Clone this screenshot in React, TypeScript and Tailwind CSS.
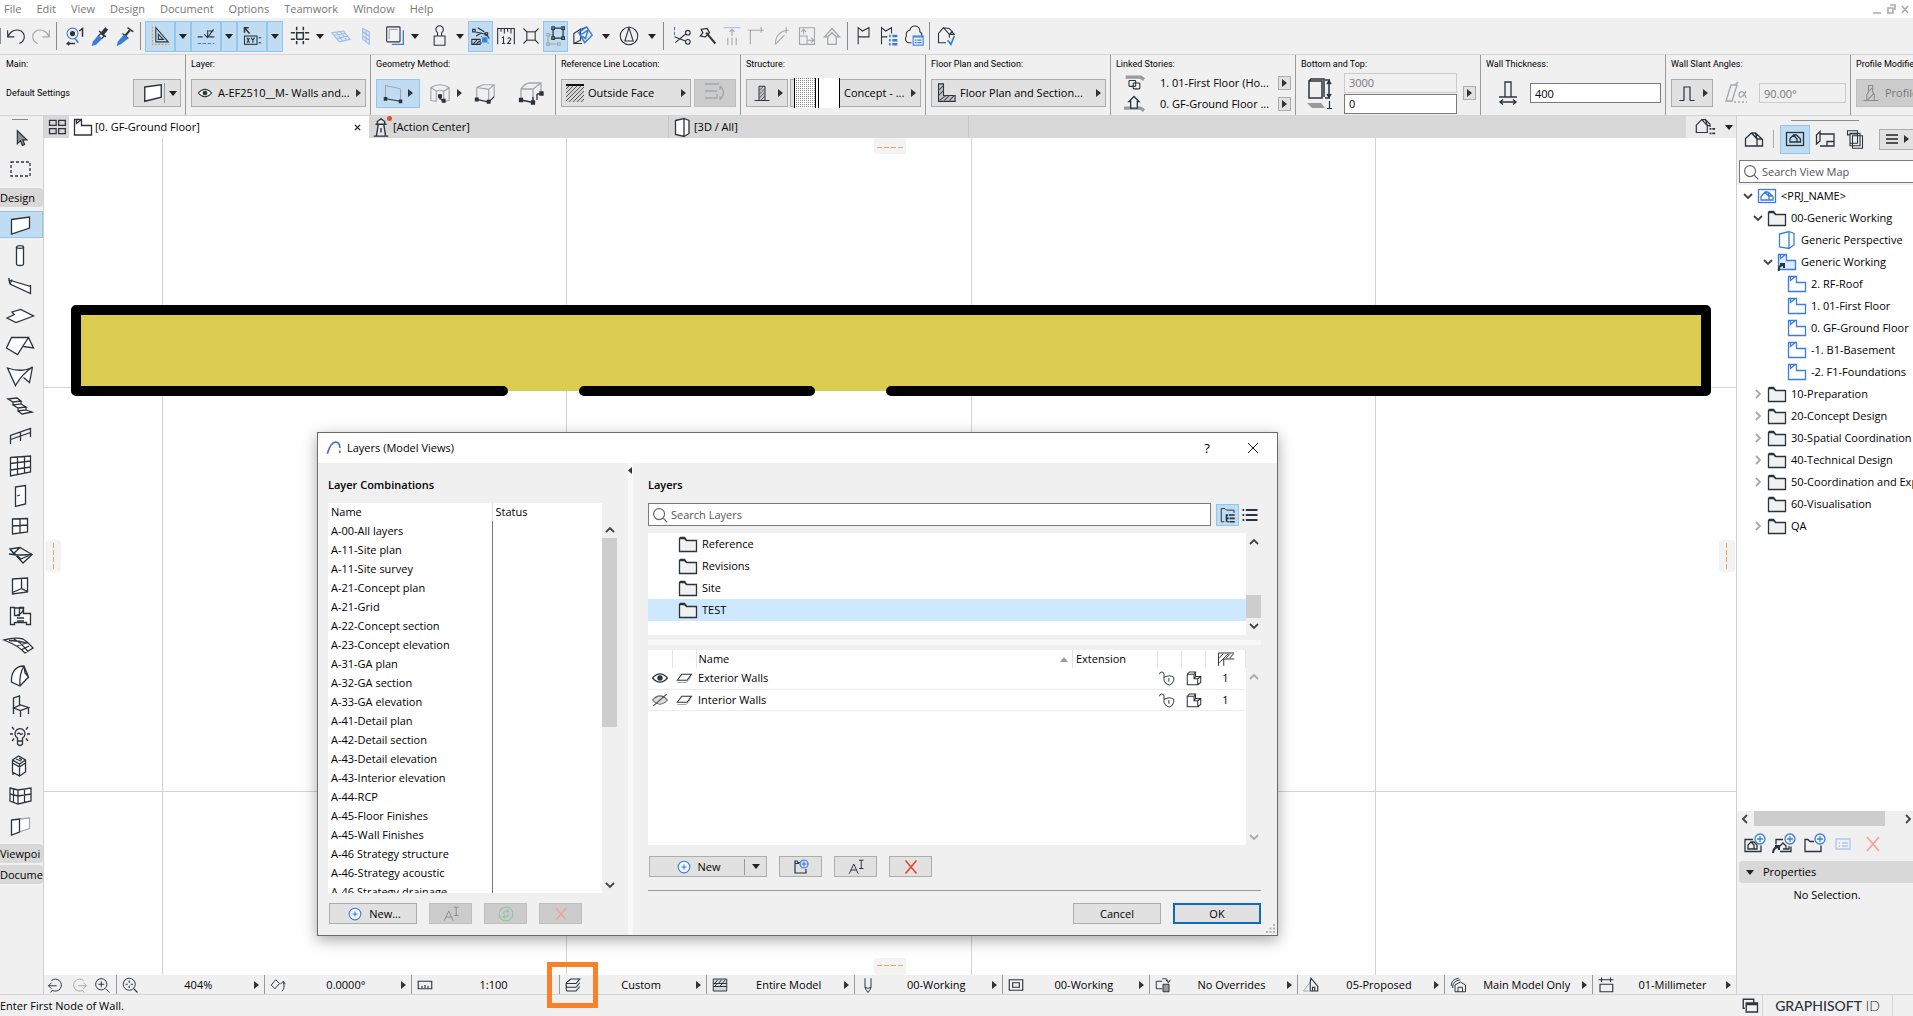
import type { ReactNode } from "react";

const INK = "#2b333b";
const BLUE = "#3b7ddd";
const GREY = "#a3a7aa";

// All icons are drawn on a 24 x 24 grid
const icons: Record<string, ReactNode> = {
    undo: <path d="M2 5v8h8M2 13C5 6 12 3 18 6c6 4 5 12-2 15" />,
    redo: <path stroke={GREY} d="M22 5v8h-8M22 13C19 6 12 3 6 6c-6 4-5 12 2 15" />,
    find: <><circle cx="9" cy="9" r="6.5" stroke={BLUE} /><circle cx="9" cy="9" r="2.5" fill={INK} /><path stroke={BLUE} strokeWidth="2" d="M12 15l4 5" /><path strokeWidth="1.8" d="M17 6l4-3v10M9 21H3l2-2M3 21l2 2M8 21h4" /></>,
    dropper: <><path strokeWidth="4.5" d="M15 9l5-6" /><path strokeWidth="1.8" d="M11 6l8 7" /><path fill={BLUE} stroke={BLUE} d="M10 12l4 3-7 7-4 1 1-4z" /><path d="M10 12l3-3 4 3-3 3" /></>,
    inject: <><path strokeWidth="2.4" d="M12 12l6-7" /><path strokeWidth="1.6" d="M9 9l7 6M15 2l7 5" /><path fill={BLUE} stroke={BLUE} d="M11 11l4 4-8 6-4 2 1-4z" /></>,
    guide: <><path d="M7 2v17h15zM10 10v6h6z" /><path stroke="#f08a3c" strokeDasharray="2 2" d="M3 1v21h20" /></>,
    snap: <><path d="M2 13h6M16 13h6M10 10l4 4 7-10M14 13V5M15 6h6" /><path stroke={BLUE} strokeDasharray="4 2" d="M2 21h20" /></>,
    xy: <><path strokeWidth="1.8" d="M3 8V2h5M3 2l6 7" /><rect x="3" y="12" width="15" height="10" /><path d="M6 14l3 6M9 14l-3 6M11 14l2 3 2-3M13 17v3M20 14h3M20 20h3" /></>,
    grid: <path strokeWidth="1.8" d="M8 1v4M8 7v9M8 18v4M16 1v4M16 7v9M16 18v4M1 8h5M8 8h8M18 8h5M1 16h5M8 16h8M18 16h5" />,
    planeH: <path stroke="#9dbbe6" fill="#dfe9f7" d="M1 8l14-2 8 10-13 3zM6 7l8 11M11 6.5l8 10.5M4 11l13-2M7 15l14-3" />,
    planeV: <path stroke="#9dbbe6" fill="#dfe9f7" d="M8 3l8 4v15l-8-6zM8 7l8 5M8 12l8 5M12 5v14" />,
    trace: <><path stroke={BLUE} strokeWidth="1.6" d="M8 22h14V5" /><rect x="2" y="1" width="16" height="18" rx="1" fill="#f4f4f4" /><path stroke={GREY} d="M5 4v12M5 4h10" /></>,
    weight: <path d="M5 12h13v11H5zM9 12V8a4.500 4.500 0 1 1 5 0v4" />,
    nodes: <><path d="M4 7l14 3 4 5M2 4h3v3H2zM17 8h3v3h-3zM6 12l7-4M8 2l8 5" /><path fill={BLUE} stroke={BLUE} d="M14 14h5v5h-5zM12 12l1 1M21 21l-1-1M21 12l-1 1M12 21l1-1" /><path d="M1 16h10v6H1zM2 22l5-5M6 22l4-4" /></>,
    ruler: <><path d="M2 2v10M2 3h20v9M6 3v4M10 3v6M14 3v4M18 3v6M7 14l2-1v8M7 21h4M2 12v10M22 12v10" /><path d="M14 15c2-2 5 0 3 2l-3 4h4" /></>,
    cross: <><rect x="7" y="7" width="10" height="10" /><path d="M3 3l4 4M21 3l-4 4M3 21l4-4M21 21l-4-4" /></>,
    group: <><path stroke={GREY} d="M1 9h3v3H1zM1 20h3v3H1zM14 20h3v3h-3zM2.500 12v8M4 21.500h10M4 10.500h4" /><path strokeWidth="1.500" d="M7 1h3v3H7zM19 1h3v3h-3zM7 13h3v3H7zM19 13h3v3h-3zM8.500 4v9M20.500 4v9M10 2.500h9M10 14.500h9" /></>,
    cube: <><path d="M1 9l8-5v13l-8 4zM9 4l6-2M1 21h10" /><path stroke={BLUE} strokeWidth="1.800" d="M7 8l9-7 7 10-9 9zM10 10l8-5-3 10-5-3" /></>,
    compass: <><circle cx="12" cy="12" r="10.500" /><path d="M12 2l5 16H7z" /></>,
    scissors: <><path stroke={BLUE} d="M3 1v4M3 7v4" /><path d="M3 13l13 5M4 20l13-11" /><circle cx="19" cy="8" r="2.800" /><circle cx="19" cy="19" r="2.800" /></>,
    axe: <><path strokeWidth="2.400" d="M11 8l11 13" /><path strokeWidth="1.500" d="M5 4l7-1 3 5-5 5-6-1 3-4z" /></>,
    adjust: <><path stroke="#9fc1ee" d="M2 2h20" /><path stroke={GREY} d="M12 12V4M9 7l3-3 3 3M7 14v9M12 14v9M17 14v9" /></>,
    fillet: <path stroke={GREY} d="M4 22V5h16M17 1v7M1 5h3" />,
    arc: <path stroke={GREY} d="M4 22C4 12 10 5 20 5M17 1v8M4 22L15 11" />,
    resize: <path stroke={GREY} d="M3 2h18v20H3zM3 12h9v10M12 17h7M17 14l3 3-3 3M8 10V4M5 7l3-3 3 3" />,
    roofup: <path stroke={GREY} strokeWidth="1.600" d="M3 13l9-10 9 10h-4v9H7v-9zM7 13l5-5 5 5" />,
    flag: <path d="M5 22V2l5 4 8-4v11H5" />,
    flaglist: <><path d="M3 22V2l5 4 7-4v7M3 13h7" /><path stroke={BLUE} strokeWidth="3" d="M12 12h2M16 12h6M12 17h2M16 17h6M12 22h2M16 22h6" /></>,
    cloud: <><path d="M9 20H5a5 5 0 0 1-2-8 5 5 0 0 1 4-7 6 6 0 0 1 12 2 4 4 0 0 1 2 5" /><rect x="11" y="12" width="12" height="11" stroke={BLUE} fill="#f0f0f0" /><path stroke={BLUE} strokeWidth="1.600" d="M11 13h12M13 17h2M16 17h5M13 20h2M16 20h5" /></>,
    housecheck: <><path d="M12 20H3V9l6-7 7 8v4M9 2l7 1 6 7h-6M16 10l4-4" /><path stroke={BLUE} strokeWidth="2" d="M14 17l4 5 4-10" /></>,

    cursor: <path fill="#8c8f92" d="M8 3v14l3.500-3 2 5 2.500-1-2-5h4.500z" />,
    marquee: <rect x="3" y="5" width="19" height="14" strokeDasharray="3 2" />,
    wall: <path fill="#fff" d="M3.500 6.500l18-2.500v11l-18 6z" />,
    column: <><path fill="#fff" d="M8.500 3v17c0 2 7 2 7 0V3" /><ellipse cx="12" cy="3" rx="3.500" ry="1.300" fill="#fff" /></>,
    beam: <path fill="#fff" d="M1 6l21.500 6.500v7L2 10zM1 4v3M4 5.500l-2 4.500M22.500 11v9" />,
    slab: <path fill="#fff" d="M-1 14l7.300-3.500L4 8l8.700-2.500L25.500 12 8 18.500z" />,
    roof: <path fill="#fff" d="M3.500 3.500h17l-11 17-11-6.500zM20.500 3.500L25.500 14l-10-1.500" />,
    shell: <path fill="#fff" d="M-.5 4Q14 9 24.500 3 14 10 7.500 21.500zM24.500 3l-3 15.500-6-5" />,
    stair: <path fill="#fff" d="M0 5l9-1 4 3-8 1zM5 8v3l8-1V7M5 11l5 3 8-1-5-3M10 14v3l8-1v-3M10 17l4 3 10-2-6-2" />,
    railing: <path d="M2.500 20v-8.500L22.500 4.500V13M12.500 17V8M2.500 15.500l20-7" />,
    curtain: <path fill="#fff" d="M2.500 3.500l20-1.500v16l-20 4zM2.500 9.500l20-2.500M2.500 16l20-3M9.500 3v17.500M16.500 2.500v16.500" />,
    door: <path fill="#fff" d="M7.500 3L17.500 1.500v18.500l-10 2.500zM9 12l3-1" />,
    window: <path fill="#fff" d="M4.500 5l15-.5v13.500l-15 2zM12 5v14M4.500 12l15-1" />,
    skylight: <path fill="#fff" d="M2 5l10-1.500 12 7-9 8.500zM1 10q12 2 23 0M2 5l5 6M12 3.500L6 9l7 6 9-4" />,
    opening: <path fill="#fff" d="M4.500 5l15-1v14l-15 2zM13.500 4.500v10l6 3M13.500 14.500l-9 4" />,
    zone: <><path fill="#fff" d="M2.500 3.500h4v8h5v-8h4v6h7v11h-4v-2h-12v2h-4z" /><path d="M6.500 4h9c0 4-3 6-6 7M9 14h7M9 17h7" /></>,
    mesh: <path fill="#fff" d="M-4 6Q7 3 15 5q5 3 10 9l-8 5Q11 12-4 6zM5 4.500q7 3 15 13M1 6.500q10 0 20 3M9 12l9-3M13 16l8-4" />,
    morph: <path fill="#fff" d="M16 2C7 2 3 9 3.500 18l8.500 4 8.500-9zM16 2q-5 8-4 20M16 2l1 7 3.500 4" />,
    chair: <path d="M5.500 20V4l6-2v9M5.500 14l7-3 8 2.500-8 3zM12.500 16.500V23M20.500 13.500V20" />,
    lamp: <><path d="M9.500 17v-3a5 5 0 1 1 5 0v3zM9.500 17v3q2.500 3 5 0v-3M9 10l2-1 2 1.500 2-1M2 10h3M19 10h3M4 3l2 2.500M20 3l-2 2.500M4 17l2-2.500M20 17l-2-2.500" /></>,
    equip: <path fill="#fff" d="M4.500 6l6-4 7 4v12l-6 4-7-4zM4.500 6l7 4 6-4M11.500 10v12M4.500 9l7 4 6-4M8 5l5 2M11 4l3 2M5 18v3" />,
    cwall: <path fill="#fff" d="M2 4l8 2 13-2v13l-13 3-8-3zM2 10l8 2 13-2M10 6v14M5.500 5v13M16.500 5v14" />,
    panels: <><path fill="#fff" stroke={GREY} d="M11 5l10.500-1v10.500L11 18" /><path fill="#fff" d="M3.500 6l8-1v13l-8 3z" /></>,

    wallThin: <path fill="#fff" strokeWidth="1.500" d="M3 5.500L21 3v13.500L3 21z" />,
    geoWall: <><path stroke={GREY} d="M3 19V3l18 4v15" /><path d="M3 19l18 3" /><path fill={INK} d="M1.500 17.500h3v3h-3zM19.500 20.500h3v3h-3z" /></>,
    geoCurve: <><path stroke={GREY} d="M2 6q10-6 20 0v14q-2 1-6 1V10q-4-2-8 0v11q-4 0-6-1zM2 6q3 2 6 4M22 6q-2 2-6 4" /><path d="M12 15v4M12 18l4 3" /><path fill={INK} d="M10.500 14h3v3h-3zM14.500 19h3v3h-3z" /></>,
    geoTrap: <><path stroke={GREY} d="M3 19V6l7-3h12v13M3 6l13 2v13M16 8l6-5" /><path d="M3 19l13 3 6-6" /><path fill={INK} d="M1.500 17.500h3v3h-3zM14.500 20h3v3h-3z" /></>,
    geoPoly: <><path stroke={GREY} d="M2 18V8q4-6 9-6h11v9M2 8h12l8-6M14 8v13" /><path d="M2 19l12 2.500M14 21v-5M18 13h5M18 13v6" /><path fill={INK} d="M.5 17.500h3v3h-3zM12.500 20h3v3h-3zM21 11h3v3h-3z" /></>,
    flip: <path stroke={GREY} d="M2 3h14M2 10h12M2 17h12v-4M17 5q7 6 0 14M17 5v4M17 19v-4" />,
    hatchCol: <><path d="M2 22h6M16 22h6M8 22V3h8v19z" fill="#c4c6c8" /><path stroke="#555" d="M8 9l6-6M8 14l8-8M8 19l8-8M11 21l5-5" /></>,
    lwall: <><path d="M3 1h6v14h14v7H3z" fill="#c4c6c8" /><path d="M3 9l6-6M3 15l6-6M4 21l8-6M10 21l6-6M16 21l6-6" stroke="#555" /></>,
    storyUp: <><path stroke="#999" strokeWidth="4" d="M2 5h18l4 3" /><rect x="6" y="9" width="8" height="7" rx="1" /><rect x="11" y="12" width="8" height="7" rx="1" /></>,
    storyDn: <><path stroke="#999" strokeWidth="4" d="M0 17h20l4 3" /><path fill="#f0f0f0" strokeWidth="1.600" d="M8 17v-8H6l6-6 6 6h-2v8z" /></>,
    thick: <path fill="none" d="M3 16h6M15 16h6M9 16V1h6v15M9 16h6M4 21h16M7 18.500L4 21l3 2.500M17 18.500l3 2.500-3 2.500" />,
    slant: <path strokeWidth="1.600" d="M2 22h6M16 22h6M8 22V4h8v18" />,
    slantA: <><path stroke={GREY} d="M2 20L7 4h6L8 20zM11 4l3-3" /><path stroke={GREY} strokeDasharray="2 2" d="M10 21h13" /><path stroke={GREY} d="M22 10c-2 6-7 8-7 4s5-6 7 3" /></>,
    heights: <path strokeWidth="1.500" d="M2 4h13v17H2zM2 4l2-2h13v18M18 3h5M18 21h5M22 5v14M20 7l2-3 2 3M20 17l2 3 2-3" />,
    prof: <path stroke="#8b8e90" d="M3 21h18M7 21V14l2-3V3h5v8l2 3v7M8 12l5-6M8 20l7-7" />,

    four: <path strokeWidth="1.500" d="M3 4h8v6H3zM14 4h8v6h-8zM3 14h8v6H3zM14 14h8v6h-8z" />,
    plan: <path fill="#fff" d="M3.500 4.500h7v6h10v9.500h-17zM5.500 4.500v4l5-4" />,
    planBlue: <path stroke={BLUE} fill="#fff" d="M3.500 4.500h8v6h9v9h-17zM5.500 4.500v4l5-4" />,
    planLink: <><path stroke={BLUE} fill="#dceafa" d="M3.500 4.500h8v6h9v9h-17zM5.500 4.500v4l5-4" /><path strokeWidth="2" d="M4 21q-1-5 4-6M5 14h4v4" /></>,
    tower: <path fill="#e7e7e7" strokeWidth="1.500" d="M7 22l2-13h6l2 13zM8 9V6l4-3 4 3v3M6 9h12M4 22h16M12 13v5" />,
    box3d: <path fill="#fff" d="M5.500 5.500L14 3.500v18l-8.500-2zM14 3.500l5 2v13l-5 3" />,
    box3dBlue: <path stroke={BLUE} fill="#fff" d="M4.500 6L14 3.500v17l-9.500-1.500zM14 3.500l5 2V17l-5 3.500" />,
    house: <path d="M3.500 19v-7.500L9.500 6l5.500 6v7zM9.500 6h4l7 6.500V19H15M13.500 6l1.500 6h5.500" />,
    houseSm: <><path d="M2.500 18v-8l6-6 6 6.500V18zM8.500 4h4l5 5v3M12.500 4l2 6.500H17" /><path strokeWidth="2" d="M18 13v2M18 18v2M20 14h3M20 19h3" /></>,
    houseBox: <><rect x="3.500" y="5.500" width="17" height="13" /><path d="M7 15v-3.500L10.500 8l3.500 4v3zM10.500 8h3l4 4v3H14" /></>,
    prj: <><rect x="3.500" y="5.500" width="17" height="13" stroke={BLUE} fill="#fff" /><path stroke={BLUE} d="M6 16v-3.500L10 8l4 4.500V16zM10 8h3l5 4.500V16h-4M13 8l1 4h4" /></>,
    layout: <path d="M3.500 17V8L7 4.500V14zM7 7h14v12H7M7 14l-3.500 3M14 19v-4.500h7" />,
    books: <path fill="#f0f0f0" d="M9 8h12v15H9zM6 5h12v15H6zM3 2h12v15H6V7H3zM6 6h9" />,
    folder: <path fill="#f1f1f1" d="M3.500 19.500v-13h5l2 2h10v11zM3.500 6.500l1-1h4l2 2.500" />,
    addHouse: <><path d="M12 7.500H4v12h16v-6M7 17v-4l3-3 3 3v4zM10 10h3l3 3v4h-3" /><Plus cx={19} cy={7} /></>,
    addLink: <><path d="M12 7.500H5v5M9 19.500h11v-5M9 14l3-3 3 3v3h-3M15 17h3v-3" /><path strokeWidth="2" d="M2 21q0-5 5-6M4 14h4v4" /><Plus cx={19} cy={7} /></>,
    addFolder: <><path d="M13 9.500H9l-2-2H4v12h16v-6" /><Plus cx={19} cy={7} /></>,
    listBlue: <path stroke="#a9c7f0" d="M5 7h14v10H5zM8 11h1M11 11h6M8 14h1M11 14h6" />,
    delPale: <path stroke="#f2a594" strokeWidth="1.800" d="M6 5l12 14M18 5L6 19" />,
    del: <path stroke="#e8492a" strokeWidth="1.800" d="M6 5l12 14M18 5L6 19" />,
    rename: <path d="M3 21l6-13 6 13M5 16h8M16 3h6M19 3v11M16 14h6" />,
    cycle: <><circle cx="12" cy="12" r="7.500" stroke="#8fc9a3" /><path stroke="#8fc9a3" d="M9 12q1-4 5-3M15 12q-1 4-5 3M13 7l2 2-2 2M11 17l-2-2 2-2" /></>,
    plus: <Plus cx={12} cy={12} r={7} />,
    treeView: <><path d="M7 21H3V3.500h5l2 2h10V9" /><path strokeWidth="2.200" d="M9 12h3M13 12h8M11 16.500h2M14 16.500h7M11 21h2M14 21h7M10 12v9" /></>,
    listView: <path strokeWidth="2.200" d="M3 6h2M7 6h14M3 12h2M7 12h14M3 18h2M7 18h14" />,
    eye: <><path strokeWidth="1.400" d="M3 12q9-10 18 0-9 10-18 0z" fill="#fff" /><circle cx="12" cy="12" r="2.600" fill={INK} /></>,
    eyeOff: <><path d="M3 12q9-10 18 0-9 10-18 0z" fill="#ddd" stroke="#666" /><path stroke="#444" d="M4 19L20 5" /></>,
    layer: <><path stroke={GREY} d="M3 18h12l6-7" /><path fill="#fff" strokeWidth="1.400" d="M3 15l6-8h13l-6 8z" /></>,
    lock: <path d="M8 11q4-1.500 7-2 3 .5 6 2v4q-1 5-6 6.500-6-1.500-7-6.500zM8 11V7q0-3-3-3T2 7M14.500 12v5" />,
    solid: <path fill="#fff" strokeWidth="1.400" d="M3 7l3-3h8l-2 3M3 7h9v6h5v8H3zM14 4v6h7v8l-4 3M12 13l2-3M17 13l4-3" />,
    hatchHead: <path d="M2 4h21M2 4V21M9 21v-9h14M3 11l5-6M3 17l12-12M12 11l5-6M17 11l5-6" />,
    search: <><circle cx="11" cy="11" r="6" stroke="#666" /><path stroke="#666" d="M15.500 15.500l4.500 4.500" /></>,
    logo: <path stroke="#4f6fc9" strokeWidth="2" d="M4 19Q8 5 14 5q5 0 5 7M19 15v3" />,

    prev: <path d="M2 13h11M6 9l-4 4 4 4M6 6a8 8 0 1 1 1 13l-2 3" />,
    next: <path stroke={GREY} d="M22 13H11M18 9l4 4-4 4M18 6a8 8 0 1 0-1 13l2 3" />,
    zoomin: <><circle cx="11" cy="11" r="7.500" /><path d="M7 11h8M11 7v8M17 17l5 5" /></>,
    fit: <><circle cx="11" cy="11" r="8" /><path strokeWidth="1.500" d="M17 17l5 5M6 11h3M13 11h3M11 6v3M11 13v3" /></>,
    orient: <path d="M3 12l6-7 5 5-6 7zM17 20q5-3 2-12M15 11l4-4 3 4" />,
    scale: <path strokeWidth="1.500" d="M3 7h18v10H3zM8 16v-3M12 16v-4M16 16v-3" />,
    layers: <path strokeWidth="1.500" d="M3 9l6-5h12l-5 6H3q-1 3 1 5h12l5-6M3 15q-1 3 1 5h12l5-6" />,
    model: <path fill="#d9d9d9" d="M3 4h18v16H3zM3 10h18M3 14h18M5 10l4-5M10 10l4-5M15 10l4-5M5 14l3-4M12 14l3-4" />,
    pen: <path d="M8 3v12q0 2 4 7 4-5 4-7V3M8 15q4 3 8 0" />,
    frame: <path strokeWidth="1.500" d="M3 5h18v14H3zM7.500 9h9v6h-9z" />,
    override: <><path d="M11 17H3V7h8M11 4q7-2 8 4M16 5l3 4 3-4" /><path fill="#9a9a9a" d="M12 11h8v10h-8z" /></>,
    reno: <><path stroke={GREY} d="M9 20H2l9-12" /><path strokeWidth="1.500" d="M11 20V7l1-4 9 11v6zM14 20v-5h3v5" /></>,
    combo: <path d="M3 13Q3 4 13 3M5 16Q4 7 15 5M8 21v-9l7-4 7 4v9zM12 21v-6h6v6" />,
    dim: <path strokeWidth="1.500" d="M2 5h20M6 2v6M18 2v6M4 11h17v10H4z" />,
    windows: <path fill="#f0f0f0" strokeWidth="1.800" d="M5 15H3V3h14v4M7 8h15v12H7zM7 10h15" />,
};

function Plus({ cx, cy, r = 5 }: { cx: number; cy: number; r?: number }) {
    return (
        <g stroke={BLUE}>
            <circle cx={cx} cy={cy} r={r} fill="#f4f8fd" />
            <path d={`M${cx - 3} ${cy}h6M${cx} ${cy - 3}v6`} />
        </g>
    );
}

interface IconProps {
    name: string;
    className?: string;
}

const Icon: React.FC<IconProps> = ({ name, className = "size-6" }) => (
    <svg viewBox="0 0 24 24" fill="none" stroke={INK} strokeWidth="1.3" className={`shrink-0 overflow-visible ${className}`} aria-hidden="true">
        {icons[name]}
    </svg>
);

const Down = () => (
    <svg viewBox="0 0 8 5" className="w-2 h-[5px] shrink-0" fill="#222" aria-hidden="true"><path d="M0 0h8L4 5z" /></svg>
);

const Right = () => (
    <svg viewBox="0 0 5 8" className="w-[5px] h-2 shrink-0" fill="#333" aria-hidden="true"><path d="M0 0v8l5-4z" /></svg>
);

const Chevron: React.FC<{ dir: "up" | "down" | "left" | "right"; pale?: boolean }> = ({ dir, pale }) => {
    const d = { up: "M1 7l4-4 4 4", down: "M1 3l4 4 4-4", left: "M7 1L3 5l4 4", right: "M3 1l4 4-4 4" }[dir];
    return (
        <svg viewBox="0 0 10 10" className="size-[10px] shrink-0" fill="none" stroke={pale ? "#aaa" : "#444"} strokeWidth="1.8" aria-hidden="true"><path d={d} /></svg>
    );
};

/* ---------- top toolbar ---------- */

const Tool: React.FC<{ icon: string; active?: boolean; wide?: boolean }> = ({ icon, active, wide }) => (
    <button aria-label={icon} className={`flex items-center justify-center h-[31px] ${wide ? "w-[30px]" : "w-[25px]"} ${active ? "bg-[#bfdcf3] outline outline-1 -outline-offset-1 outline-[#93c5ee]" : ""}`}>
        <Icon name={icon} className="size-5" />
    </button>
);

const Drop: React.FC<{ active?: boolean }> = ({ active }) => (
    <button aria-label="More options" className={`flex items-center justify-center w-4 h-[31px] ${active ? "bg-[#bfdcf3] outline outline-1 -outline-offset-1 outline-[#93c5ee]" : ""}`}>
        <Down />
    </button>
);

const Sep = () => <div className="w-px h-7 mx-[3px] bg-[#8c8c8c]" />;

const Toolbar = () => (
    <div className="h-9 flex items-center bg-[#f0f0f0] shrink-0">
        <div className="w-px h-4 mr-[2px] bg-[#8c8c8c]" />
        <Tool icon="undo" /><Tool icon="redo" />
        <Sep />
        <div className="flex pl-[2px]"><Tool icon="find" /><Tool icon="dropper" /><Tool icon="inject" /></div>
        <Sep />
        <div className="flex ml-px mr-1">
            <Tool icon="guide" active wide /><Drop active />
            <Tool icon="snap" active wide /><Drop active />
            <Tool icon="xy" active wide /><Drop active />
        </div>
        <Tool icon="grid" /><Drop />
        <div className="flex mr-1"><Tool icon="planeH" /><Tool icon="planeV" /></div>
        <Tool icon="trace" />
        <div className="flex mr-1"><Drop /></div>
        <Tool icon="weight" /><Drop />
        <Tool icon="nodes" active /><Tool icon="ruler" /><Tool icon="cross" /><Tool icon="group" active />
        <Tool icon="cube" wide /><Drop />
        <Tool icon="compass" wide /><Drop />
        <Sep />
        <div className="flex ml-[2px]"><Tool icon="scissors" /><Tool icon="axe" /><Tool icon="adjust" /><Tool icon="fillet" /><Tool icon="arc" /><Tool icon="resize" /><Tool icon="roofup" /></div>
        <Sep />
        <Tool icon="flag" /><Tool icon="flaglist" /><Tool icon="cloud" />
        <Sep />
        <Tool icon="housecheck" />
    </div>
);

/* ---------- info box ---------- */

const Section: React.FC<{ label: string; children: ReactNode }> = ({ label, children }) => (
    <section className="w-[185px] shrink-0 border-r border-[#9a9a9a] last:border-r-0 pl-[5px] pr-1 flex flex-col">
        <h2 className="h-[18px] leading-[18px] text-[9px] font-[Roboto,sans-serif] whitespace-nowrap">{label}</h2>
        <div className="h-10 flex items-center">{children}</div>
    </section>
);

const box = "h-7 border border-[#adadad] bg-[#e1e1e1] flex items-center";
const field = "h-5 w-full min-w-0 border px-1 leading-[18px] outline-none";
const mini = "w-[13px] h-[14px] shrink-0 border border-[#adadad] bg-[#e1e1e1] flex items-center justify-center";

const InfoBox = () => (
    <div className="h-[61px] shrink-0 flex bg-[#f0f0f0] border-t border-[#d5d5d5] overflow-hidden pl-px">
        <Section label="Main:">
            <span className="flex-1 text-[9px] font-[Roboto,sans-serif]">Default Settings</span>
            <button aria-label="Wall settings" className={`${box} w-12 justify-between pl-2 pr-1`}>
                <Icon name="wallThin" className="size-[22px]" />
                <span className="border-l border-[#999] h-5 pl-1 flex items-center"><Down /></span>
            </button>
        </Section>
        <Section label="Layer:">
            <button className={`${box} w-full px-1`}>
                <Icon name="eye" className="size-[18px]" />
                <span className="flex-1 pl-1 text-left whitespace-nowrap">A-EF2510__M- Walls and...</span>
                <Right />
            </button>
        </Section>
        <Section label="Geometry Method:">
            <button aria-label="Straight" className="h-[29px] w-11 flex items-center justify-between px-1.5 bg-[#bfdcf3] border border-[#93c5ee]"><Icon name="geoWall" className="size-5" /><Right /></button>
            <button aria-label="Curved" className="w-10 ml-[9px] flex items-center gap-1.5"><Icon name="geoCurve" className="size-[22px]" /><Right /></button>
            <button aria-label="Trapezoid" className="w-[45px] pl-[5px]"><Icon name="geoTrap" className="size-[22px]" /></button>
            <button aria-label="Polygon" className="pl-[5px]"><Icon name="geoPoly" /></button>
        </Section>
        <Section label="Reference Line Location:">
            <button className={`${box} flex-1 gap-1 px-1 mr-[3px]`}>
                <svg viewBox="0 0 18 18" className="size-[18px] shrink-0" stroke="#555" aria-hidden="true">
                    <path fill="#d6d6d6" stroke="none" d="M0 0h18v18H0z" />
                    <path d="M0 5l5-5M0 9l9-9M0 13L13 0M0 17L17 0M3 18L18 3M7 18L18 7M11 18l7-7M15 18l3-3" />
                    <path stroke="#111" strokeWidth="2" d="M0 1h18" />
                </svg>
                <span className="flex-1 text-left truncate">Outside Face</span>
                <Right />
            </button>
            <button disabled aria-label="Flip" className="h-7 w-[42px] bg-[#cccccc] border border-[#bfbfbf] flex items-center justify-center"><Icon name="flip" /></button>
        </Section>
        <Section label="Structure:">
            <button aria-label="Basic structure" className={`${box} w-[42px] justify-between pl-1.5 pr-1`}><Icon name="hatchCol" className="size-[18px]" /><Right /></button>
            <button className={`${box} flex-1 gap-1 pl-[3px] pr-1 ml-[2px]`}>
                <svg viewBox="0 0 46 30" className="w-[46px] h-[30px] shrink-0" aria-hidden="true">
                    <defs><pattern id="dots" width="2" height="2" patternUnits="userSpaceOnUse"><path fill="#888" d="M0 0h1v1H0z" /></pattern></defs>
                    <path fill="#fff" d="M0 0h46v30H0z" />
                    <path fill="url(#dots)" d="M1 0h20v30H1z" />
                    <path stroke="#000" d="M.5 0v30M21.500 0v30M24.500 0v30M45.500 0v30" />
                </svg>
                <span className="flex-1 text-left truncate">Concept - ...</span>
                <Right />
            </button>
        </Section>
        <Section label="Floor Plan and Section:">
            <button className={`${box} w-full gap-1 px-1`}>
                <Icon name="lwall" className="size-5" />
                <span className="flex-1 text-left truncate">Floor Plan and Section...</span>
                <Right />
            </button>
        </Section>
        <Section label="Linked Stories:">
            <div className="w-full flex flex-col gap-[1px]">
                <div className="flex items-center pl-2">
                    <Icon name="storyUp" className="size-5" />
                    <span className="flex-1 pl-4 truncate">1. 01-First Floor (Ho...</span>
                    <button aria-label="Top story" className={mini}><Right /></button>
                </div>
                <div className="flex items-center pl-2">
                    <Icon name="storyDn" className="size-5" />
                    <span className="flex-1 pl-4 truncate">0. GF-Ground Floor ...</span>
                    <button aria-label="Home story" className={mini}><Right /></button>
                </div>
            </div>
        </Section>
        <Section label="Bottom and Top:">
            <div className="w-9 shrink-0 flex flex-col items-start pl-1.5">
                <Icon name="heights" />
                <svg viewBox="0 0 28 8" className="w-7 h-2" aria-hidden="true"><path fill="#999" d="M0 2h14l4 5H5z" /><path stroke={INK} d="M22.500 0v7M20 7.500h5" strokeWidth="1.200" /></svg>
            </div>
            <div className="flex-1 min-w-0 flex flex-col gap-px pl-[7px]">
                <input aria-label="Top offset" disabled defaultValue="3000" className={`${field} border-[#ccc] bg-[#f0f0f0] text-[#777]`} />
                <input aria-label="Bottom offset" defaultValue="0" className={`${field} border-[#7a7a7a] bg-white`} />
            </div>
            <button aria-label="Link options" className={`${mini} ml-1.5`}><Right /></button>
        </Section>
        <Section label="Wall Thickness:">
            <div className="w-11 flex justify-center shrink-0"><Icon name="thick" /></div>
            <input aria-label="Wall Thickness" defaultValue="400" className={`${field} border-[#7a7a7a] bg-white`} />
        </Section>
        <Section label="Wall Slant Angles:">
            <button aria-label="Slant type" className={`${box} w-[42px] shrink-0 justify-between pl-1.5 pr-1`}><Icon name="slant" className="size-[18px]" /><Right /></button>
            <div className="w-[46px] flex justify-center shrink-0"><Icon name="slantA" /></div>
            <input aria-label="Slant angle" disabled defaultValue="90.00°" className={`${field} border-[#ccc] bg-[#f0f0f0] text-[#777]`} />
        </Section>
        <Section label="Profile Modifiers:">
            <button disabled className="h-7 w-full shrink-0 bg-[#cccccc] border border-[#bfbfbf] text-[#777] flex items-center gap-1 px-1"><Icon name="prof" className="size-5" />Profile</button>
        </Section>
    </div>
);

/* ---------- toolbox ---------- */

const tools = ["column", "beam", "slab", "roof", "shell", "stair", "railing", "curtain", "door", "window", "skylight", "opening", "zone", "mesh", "morph", "chair", "lamp", "equip", "cwall", "panels"];

const Toolbox = () => (
    <aside className="w-11 shrink-0 bg-[#f0f0f0] border-r border-[#d0d0d0] flex flex-col overflow-hidden">
        <div className="h-px w-4 mt-[3px] ml-3 shrink-0 bg-[#8c8c8c]" />
        <button aria-label="Arrow" className="h-[34px] pt-1 w-[42px] shrink-0 flex items-center justify-center"><Icon name="cursor" className="size-[22px]" /></button>
        <button aria-label="Marquee" className="h-[30px] mb-1 w-10 shrink-0 flex items-center justify-center"><Icon name="marquee" /></button>
        <h2 className="h-[19px] leading-[19px] shrink-0 bg-[#d8d8d8] rounded-r">Design</h2>
        <button aria-label="Wall" className="h-[27px] mt-1 mb-[3px] shrink-0 pr-[3px] flex items-center justify-center bg-[#bfdcf3] border border-l-0 border-[#93c5ee]"><Icon name="wall" /></button>
        {tools.map((t) => (
            <button key={t} aria-label={t} className="h-[30px] w-10 shrink-0 flex items-center justify-center"><Icon name={t} /></button>
        ))}
        <h2 className="h-[19px] leading-[19px] mt-[3px] mb-0.5 shrink-0 bg-[#d8d8d8] rounded-r whitespace-nowrap">Viewpoi</h2>
        <h2 className="h-[19px] leading-[19px] shrink-0 bg-[#d8d8d8] rounded-r whitespace-nowrap">Docume</h2>
    </aside>
);

/* ---------- layers dialog ---------- */

const combinations = [
    "A-00-All layers", "A-11-Site plan", "A-11-Site survey", "A-21-Concept plan", "A-21-Grid", "A-22-Concept section",
    "A-23-Concept elevation", "A-31-GA plan", "A-32-GA section", "A-33-GA elevation", "A-41-Detail plan", "A-42-Detail section",
    "A-43-Detail elevation", "A-43-Interior elevation", "A-44-RCP", "A-45-Floor Finishes", "A-45-Wall Finishes",
    "A-46 Strategy structure", "A-46-Strategy acoustic", "A-46 Strategy drainage",
];

const layers = [
    { name: "Exterior Walls", visible: true },
    { name: "Interior Walls", visible: false },
];

const btn = "h-[21px] border border-[#adadad] bg-[#e1e1e1] flex items-center justify-center";
const btnOff = "h-[21px] w-[43px] border border-[#bfbfbf] bg-[#cccccc] flex items-center justify-center";

const LayersDialog = () => (
    <div role="dialog" aria-label="Layers (Model Views)" className="absolute left-[273px] top-[294px] w-[961px] h-[504px] flex flex-col bg-[#f0f0f0] border border-[#6b6b6b] shadow-[0_4px_14px_rgba(0,0,0,0.35)]">
        <header className="h-[30px] shrink-0 bg-white flex items-center pl-[6px]">
            <Icon name="logo" className="size-5" />
            <h1 className="flex-1 pl-[3px]">Layers (Model Views)</h1>
            <button aria-label="Help" className="w-11 text-[13px]">?</button>
            <button aria-label="Close" className="w-12 h-full flex items-center justify-center">
                <svg viewBox="0 0 10 10" className="size-[10px]" stroke="#111" aria-hidden="true"><path d="M0 0l10 10M10 0L0 10" /></svg>
            </button>
        </header>
        <div className="flex-1 min-h-0 flex">
            <div className="w-[300px] pl-[10px] flex flex-col">
                <h2 className="h-10 pt-1 flex items-center font-semibold">Layer Combinations</h2>
                <div className="h-[390px] flex">
                    <div className="w-[274px] bg-white overflow-hidden">
                        <table className="w-full table-fixed border-collapse">
                            <thead>
                                <tr className="h-[18px] text-left">
                                    <th className="w-[164px] font-normal pl-[3px] p-0 border-r border-[#ddd]">Name</th>
                                    <th className="font-normal pl-[3px] p-0">Status</th>
                                </tr>
                            </thead>
                            <tbody>
                                {combinations.map((c) => (
                                    <tr key={c} className="h-[19px]">
                                        <td className="p-0 pl-[3px] border-r border-[#777] whitespace-nowrap leading-[19px]">{c}</td>
                                        <td className="p-0" />
                                    </tr>
                                ))}
                            </tbody>
                        </table>
                    </div>
                    <div className="w-[15px] pt-[22px] pb-[3px] flex flex-col items-center">
                        <Chevron dir="up" />
                        <div className="mt-[3px] w-full h-[189px] bg-[#cdcdcd]" />
                        <div className="mt-auto"><Chevron dir="down" /></div>
                    </div>
                </div>
                <div className="mt-[10px] flex gap-3 pl-px">
                    <button className={`${btn} w-[88px] gap-1`}><Icon name="plus" className="size-5" />New...</button>
                    <button disabled aria-label="Rename combination" className={btnOff}><Icon name="rename" className="size-[18px] opacity-40" /></button>
                    <button disabled aria-label="Update combination" className={btnOff}><Icon name="cycle" className="size-[22px]" /></button>
                    <button disabled aria-label="Delete combination" className={btnOff}><Icon name="delPale" className="size-5" /></button>
                </div>
            </div>
            <div className="w-[15px] flex justify-end">
                <div className="w-[5px] bg-[#f8f8f8] pt-1">
                    <svg viewBox="0 0 4 7" className="w-1 h-[7px]" fill="#333" aria-hidden="true"><path d="M4 0v7L0 3.500z" /></svg>
                </div>
            </div>
            <div className="flex-1 pl-[15px] pr-4 flex flex-col">
                <h2 className="h-10 pt-1 flex items-center font-semibold">Layers</h2>
                <div className="flex items-center h-[23px]">
                    <label className="flex-1 h-full flex items-center bg-white border border-[#7a7a7a] mr-[5px]">
                        <Icon name="search" className="size-[22px]" />
                        <input placeholder="Search Layers" aria-label="Search Layers" className="flex-1 outline-none placeholder:text-[#555]" />
                    </label>
                    <button aria-label="Folder view" className="w-[23px] h-[22px] bg-[#bfdcf3] border border-[#93c5ee] flex items-center justify-center"><Icon name="treeView" className="size-[18px]" /></button>
                    <button aria-label="List view" className="w-[22px] h-[22px] flex items-center justify-center"><Icon name="listView" className="size-5" /></button>
                </div>
                <div className="flex mt-[7px] h-[102px]">
                    <ul className="flex-1 bg-white">
                        {["Reference", "Revisions", "Site", "TEST"].map((f) => (
                            <li key={f} className={`h-[22px] flex items-center gap-[2px] pl-7 ${f === "TEST" ? "bg-[#cde8ff]" : ""}`}><Icon name="folder" />{f}</li>
                        ))}
                    </ul>
                    <div className="w-[15px] flex flex-col items-center py-1">
                        <Chevron dir="up" />
                        <div className="mt-auto mb-[3px] w-full h-[23px] bg-[#cdcdcd]" />
                        <Chevron dir="down" />
                    </div>
                </div>
                <div className="mt-[5px] h-[5px] bg-[#f8f8f8]" />
                <div className="flex mt-[5px] h-[195px]">
                    <div className="flex-1 bg-white">
                        <table className="w-full table-fixed border-collapse">
                            <thead>
                                <tr className="h-[18px] text-left [&>th]:p-0 [&>th]:font-normal [&>th]:border-r [&>th]:border-[#e3e3e3]">
                                    <th className="w-6" /><th className="w-6" />
                                    <th><span className="flex items-center justify-between pl-[2px] pr-1">Name <svg viewBox="0 0 8 5" className="w-2 h-[5px]" fill="#999" aria-hidden="true"><path d="M0 5h8L4 0z" /></svg></span></th>
                                    <th className="w-[85px]"><span className="pl-[3px]">Extension</span></th>
                                    <th className="w-6" /><th className="w-6" />
                                    <th className="w-10" aria-label="Intersection group"><Icon name="hatchHead" className="size-[18px] mx-auto" /></th>
                                </tr>
                            </thead>
                            <tbody>
                                {layers.map((l) => (
                                    <tr key={l.name} className="h-[21px] border-b border-[#ececec] [&>td]:p-0">
                                        <td><Icon name={l.visible ? "eye" : "eyeOff"} className="size-5 mx-auto" /></td>
                                        <td><Icon name="layer" className="size-[18px] mx-auto" /></td>
                                        <td className="leading-4"><span className="pl-[2px]">{l.name}</span></td>
                                        <td />
                                        <td><Icon name="lock" className="size-[18px]" /></td>
                                        <td><Icon name="solid" className="size-[18px] mx-auto" /></td>
                                        <td className="text-center">1</td>
                                    </tr>
                                ))}
                            </tbody>
                        </table>
                    </div>
                    <div className="w-[15px] flex flex-col items-center justify-between pt-[22px] pb-[3px]">
                        <Chevron dir="up" pale /><Chevron dir="down" pale />
                    </div>
                </div>
                <div className="mt-[11px] flex gap-3 pl-px">
                    <div className="flex w-[118px] h-[21px] border border-[#adadad] bg-[#e1e1e1] items-center">
                        <button className="flex-1 flex items-center justify-center gap-1"><Icon name="plus" className="size-5" />New</button>
                        <button aria-label="New layer options" className="w-[22px] h-4 border-l border-[#999] flex items-center justify-center"><Down /></button>
                    </div>
                    <button aria-label="New folder" className={`${btn} w-[43px]`}>
                        <svg viewBox="0 0 16 16" className="size-4" fill="none" stroke={INK} strokeWidth="1.2" aria-hidden="true"><path d="M7 3.500H5L4 2H2v12h11v-4M2 4.500h4" /><circle cx="11" cy="5" r="4" stroke={BLUE} /><path stroke={BLUE} d="M8.500 5h5M11 2.500v5" /></svg>
                    </button>
                    <button aria-label="Rename" className={`${btn} w-[43px]`}><Icon name="rename" className="size-[18px]" /></button>
                    <button aria-label="Delete" className={`${btn} w-[43px]`}><Icon name="del" className="size-[22px]" /></button>
                </div>
                <hr className="mt-[13px] border-[#9a9a9a]" />
                <div className="mt-3 flex justify-end gap-3">
                    <button className={`${btn} w-[88px]`}>Cancel</button>
                    <button className="h-[21px] w-[88px] border-2 border-[#0f6cbd] bg-[#e1e1e1] flex items-center justify-center">OK</button>
                </div>
            </div>
        </div>
        <svg viewBox="0 0 9 9" className="absolute right-0.5 bottom-0.5 size-[9px]" fill="#b5b5b5" aria-hidden="true"><path d="M7 0h2v2H7zM7 3.500h2v2H7zM3.500 3.500h2v2h-2zM7 7h2v2H7zM3.500 7h2v2h-2zM0 7h2v2H0z" /></svg>
    </div>
);

/* ---------- drawing area ---------- */

const Drawing = () => (
    <svg viewBox="0 0 1692 837" preserveAspectRatio="xMidYMid slice" className="block w-full h-full" aria-label="Floor plan">
        <path stroke="#d3d3d3" d="M118.500 0v837M522.500 0v837M927.500 0v837M1331.500 0v837M0 249.500h1692M0 653.500h1692" />
        <path fill="#dccc50" d="M32 172h1630v81H32z" />
        <path fill="none" stroke="#000" strokeWidth="10" strokeLinecap="round" strokeLinejoin="round" d="M459 253H32V172h1630v81H847M540 253h226" />
        <g fill="#f3f3f3">
            <rect x="830" y="0" width="32" height="16" rx="3" />
            <rect x="830" y="820" width="32" height="17" rx="3" />
            <rect x="1" y="402" width="16" height="32" rx="3" />
            <rect x="1675" y="402" width="16" height="32" rx="3" />
        </g>
        <path stroke="#eda45c" strokeDasharray="5 2" d="M833 9.500h27M833 827.500h27M9.500 405v27M1682.500 405v27" />
    </svg>
);

interface Option {
    icon: string;
    text: string;
    noArrow?: boolean;
    marked?: boolean;
}

const quick: Option[] = [
    { icon: "fit", text: "404%" },
    { icon: "orient", text: "0.0000°" },
    { icon: "scale", text: "1:100", noArrow: true },
    { icon: "layers", text: "Custom", marked: true },
    { icon: "model", text: "Entire Model" },
    { icon: "pen", text: "00-Working" },
    { icon: "frame", text: "00-Working" },
    { icon: "override", text: "No Overrides" },
    { icon: "reno", text: "05-Proposed" },
    { icon: "combo", text: "Main Model Only" },
    { icon: "dim", text: "01-Millimeter" },
];

const QuickOptions = () => (
    <div className="h-[19px] shrink-0 bg-[#f0f0f0] flex">
        <div className="w-[72px] shrink-0 flex">
            <button aria-label="Previous view" className="w-[23px] flex items-center justify-center"><Icon name="prev" className="size-[18px]" /></button>
            <button aria-label="Next view" className="w-[23px] flex items-center justify-center"><Icon name="next" className="size-[18px]" /></button>
            <button aria-label="Zoom in" className="w-[23px] flex items-center justify-center"><Icon name="zoomin" className="size-[18px]" /></button>
        </div>
        {quick.map((q) => (
            <button key={q.icon} className="relative flex-1 last:grow-0 last:basis-36 min-w-0 flex items-center border-l border-[#9a9a9a] pl-1 pr-[5px]">
                <Icon name={q.icon} className="size-[18px]" />
                <span className="flex-1 text-center whitespace-nowrap pl-1">{q.text}</span>
                <span className="w-[5px]">{!q.noArrow && <Right />}</span>
                {q.marked && <span className="absolute z-10 -left-[13px] -top-[13px] w-[51px] h-[46px] border-[5px] border-[#fb8128]" />}
            </button>
        ))}
    </div>
);

const Tabs = () => (
    <div className="h-[22px] shrink-0 bg-[#d8d8d8] flex items-center">
        <button aria-label="Tab overview" className="w-[25px] flex justify-center"><Icon name="four" className="size-5" /></button>
        <div className="w-[300px] h-full bg-white flex items-center pl-[2px]">
            <Icon name="plan" />
            <button className="flex-1 text-left">[0. GF-Ground Floor]</button>
            <button aria-label="Close tab" className="w-6 flex justify-center">
                <svg viewBox="0 0 8 8" className="size-[7px]" stroke="#222" strokeWidth="1.600" aria-hidden="true"><path d="M1 1l6 6M7 1L1 7" /></svg>
            </button>
        </div>
        <div className="w-[300px] h-full flex items-center border-r border-[#c6c6c6] pl-px">
            <span className="relative">
                <Icon name="tower" className="size-[22px]" />
                <span className="absolute right-0 top-0 size-[5px] rounded-full bg-[#e8492a]" />
            </span>
            <button className="pl-px">[Action Center]</button>
        </div>
        <div className="w-[300px] h-full flex items-center border-r border-[#c6c6c6] pl-px">
            <Icon name="box3d" />
            <button>[3D / All]</button>
        </div>
        <button aria-label="View options" className="ml-auto w-[50px] h-full bg-[#ebebeb] flex items-center justify-between pl-2 pr-[3px]"><Icon name="houseSm" className="size-[22px]" /><Down /></button>
    </div>
);

/* ---------- navigator ---------- */

interface Node {
    level: number;
    icon: string;
    text: string;
    open?: boolean;
}

const tree: Node[] = [
    { level: 0, icon: "prj", text: "<PRJ_NAME>", open: true },
    { level: 1, icon: "folder", text: "00-Generic Working", open: true },
    { level: 2, icon: "box3dBlue", text: "Generic Perspective" },
    { level: 2, icon: "planLink", text: "Generic Working", open: true },
    { level: 3, icon: "planBlue", text: "2. RF-Roof" },
    { level: 3, icon: "planBlue", text: "1. 01-First Floor" },
    { level: 3, icon: "planBlue", text: "0. GF-Ground Floor" },
    { level: 3, icon: "planBlue", text: "-1. B1-Basement" },
    { level: 3, icon: "planBlue", text: "-2. F1-Foundations" },
    { level: 1, icon: "folder", text: "10-Preparation", open: false },
    { level: 1, icon: "folder", text: "20-Concept Design", open: false },
    { level: 1, icon: "folder", text: "30-Spatial Coordination", open: false },
    { level: 1, icon: "folder", text: "40-Technical Design", open: false },
    { level: 1, icon: "folder", text: "50-Coordination and Export", open: false },
    { level: 1, icon: "folder", text: "60-Visualisation" },
    { level: 1, icon: "folder", text: "QA", open: false },
];

const indent = ["pl-1.5", "pl-4", "pl-[26px]", "pl-9"];

const Navigator = () => (
    <aside className="w-[177px] shrink-0 bg-[#f0f0f0] border-l border-[#d0d0d0] flex flex-col overflow-hidden">
        <div className="mt-1 mx-auto w-[68px] h-px shrink-0 bg-[#8c8c8c]" />
        <div className="h-9 mb-[3px] flex items-center shrink-0 pl-[2px]">
            <button aria-label="Project Map" className="w-[30px] h-7 shrink-0 flex items-center justify-center"><Icon name="house" /></button>
            <div className="w-px h-[18px] ml-1 mr-1.5 shrink-0 bg-[#aaa]" />
            <button aria-label="View Map" className="w-[30px] h-[29px] flex shrink-0 items-center justify-center bg-[#bfdcf3] border border-[#93c5ee]"><Icon name="houseBox" /></button>
            <button aria-label="Layout Book" className="w-[30px] flex shrink-0 justify-center"><Icon name="layout" /></button>
            <button aria-label="Publisher" className="w-[30px] flex shrink-0 justify-center"><Icon name="books" className="size-5" /></button>
            <button aria-label="Navigator options" className="ml-[9px] w-10 h-[21px] shrink-0 border border-[#adadad] bg-[#e1e1e1] flex items-center gap-1.5 pl-1.5">
                <svg viewBox="0 0 12 10" className="w-3 h-[10px]" stroke="#222" strokeWidth="1.300" aria-hidden="true"><path d="M0 1h12M0 5h12M0 9h12" /></svg>
                <Right />
            </button>
        </div>
        <label className="h-[23px] shrink-0 ml-[2px] flex items-center bg-white border border-r-0 border-[#7a7a7a]">
            <Icon name="search" className="size-[22px]" />
            <input aria-label="Search View Map" placeholder="Search View Map" className="w-[140px] outline-none placeholder:text-[#555]" />
        </label>
        <ul className="flex-1 min-h-0 bg-white mt-0.5">
            {tree.map((n) => (
                <li key={n.text} className={`h-[22px] flex items-center whitespace-nowrap ${indent[n.level]}`}>
                    <span className="w-3 shrink-0">{n.open !== undefined && <Chevron dir={n.open ? "down" : "right"} pale={!n.open} />}</span>
                    <Icon name={n.icon} />
                    <span className="pl-[2px]">{n.text}</span>
                </li>
            ))}
        </ul>
        <div className="h-[15px] shrink-0 flex items-center pl-[3px]">
            <Chevron dir="left" />
            <div className="ml-1 w-[131px] h-full bg-[#cdcdcd]" />
            <span className="ml-auto"><Chevron dir="right" /></span>
        </div>
        <div className="h-[35px] shrink-0 flex items-center gap-1.5 pl-1">
            {["addHouse", "addLink", "addFolder", "listBlue", "delPale"].map((i) => (
                <button key={i} aria-label={i}><Icon name={i} /></button>
            ))}
        </div>
        <button className="h-[22px] ml-[2px] shrink-0 bg-[#d8d8d8] rounded-l flex items-center gap-[9px] pl-[7px]"><Down />Properties</button>
        <p className="h-[111px] pt-1 pl-1 shrink-0 text-center">No Selection.</p>
    </aside>
);

const App: React.FC = () => {
    return (
        <div className="h-screen w-full flex flex-col overflow-hidden bg-white text-black text-[11px] leading-4 font-['Open_Sans','Noto_Sans',sans-serif]">
            <nav className="h-[18px] shrink-0 flex items-center gap-[15px] pl-1 pr-1 text-[#777]">
                {["File", "Edit", "View", "Design", "Document", "Options", "Teamwork", "Window", "Help"].map((m) => (
                    <button key={m}>{m}</button>
                ))}
                <svg viewBox="0 0 38 10" className="ml-auto w-[38px] h-[10px]" fill="none" stroke="#aaa" strokeWidth="1.600" aria-hidden="true">
                    <path d="M2 9h8M17 4h5v5h-5zM19 1h5v5M31 2l6 7M37 2l-6 7" />
                </svg>
            </nav>
            <Toolbar />
            <InfoBox />
            <div className="flex-1 min-h-0 flex border-t border-[#d5d5d5]">
                <Toolbox />
                <main className="flex-1 min-w-0 flex flex-col">
                    <Tabs />
                    <div className="relative flex-1 min-h-0">
                        <Drawing />
                        <LayersDialog />
                    </div>
                    <QuickOptions />
                </main>
                <Navigator />
            </div>
            <footer className="h-[22px] shrink-0 bg-[#f0f0f0] border-t border-[#d5d5d5] flex items-center">
                <span className="flex-1">Enter First Node of Wall.</span>
                <button aria-label="Windows" className="w-6 flex justify-center"><Icon name="windows" className="size-[18px]" /></button>
                <button className="w-[131px] h-full border-x border-[#d5d5d5] text-[14px] text-[#2b333b] font-[Lato,sans-serif] whitespace-nowrap"><span className="font-medium">GRAPHISOFT</span> <span className="font-light">ID</span></button>
                <span className="w-5" />
            </footer>
        </div>
    );
};

export default App;
